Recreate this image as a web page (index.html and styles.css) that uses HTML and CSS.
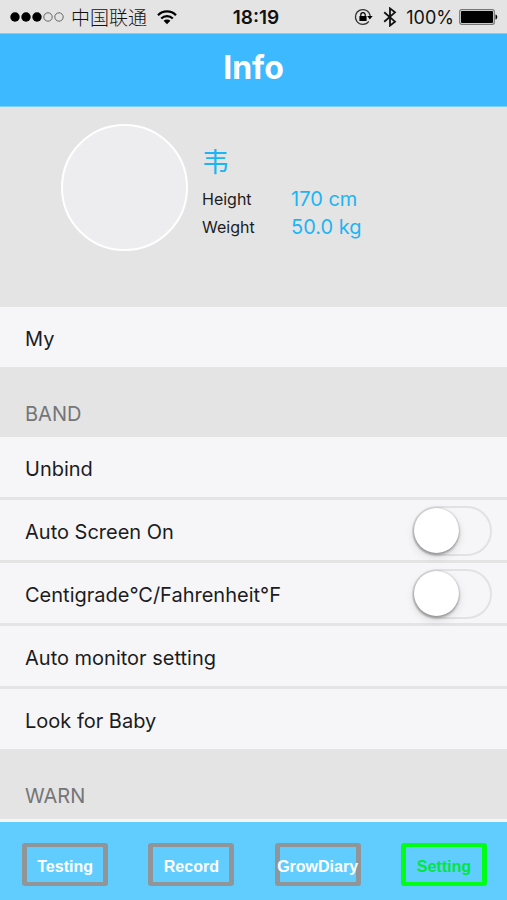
FILE: index.html
```html
<!DOCTYPE html>
<html lang="en">
<head>
<meta charset="utf-8">
<meta name="viewport" content="width=device-width, initial-scale=1">
<title>Info</title>
<link rel="stylesheet" href="styles.css">
</head>
<body>
<div class="status">
  <div class="status-side">
    <svg class="signal" viewBox="0 0 54 12" width="54" height="12" aria-hidden="true">
      <g fill="#000"><circle cx="5" cy="6" r="4.7"/><circle cx="16" cy="6" r="4.7"/><circle cx="27" cy="6" r="4.7"/></g>
      <g fill="none" stroke="#666" stroke-width="1"><circle cx="38" cy="6" r="4.2"/><circle cx="49" cy="6" r="4.2"/></g>
    </svg>
    <span class="carrier" lang="zh">中国联通</span>
    <svg class="wifi" viewBox="0 0 20 15" width="20" height="15" aria-hidden="true">
      <g fill="none" stroke="#000" stroke-width="2.2"><path d="M1 5.2a12.7 12.7 0 0 1 18 0"/><path d="M4.2 8.5a8.2 8.2 0 0 1 11.6 0"/></g>
      <path d="M10 14.2 6.6 10.8a4.8 4.8 0 0 1 6.8 0z"/>
    </svg>
  </div>
  <span class="clock">18:19</span>
  <div class="status-side status-end">
    <svg viewBox="0 0 19 18" width="19" height="18" aria-hidden="true">
      <path d="M14.8 13.4A7.4 7.4 0 1 1 16.2 8" fill="none" stroke="#333" stroke-width="1.2"/>
      <path d="M13.2 8h5.4l-2.7 3.6z"/>
      <rect x="5.4" y="8" width="7.2" height="5" rx=".6"/>
      <path d="M6.8 8.3V6.8a2.2 2.2 0 0 1 4.4 0v1.5" fill="none" stroke="#000" stroke-width="1.2"/>
    </svg>
    <svg class="bluetooth" viewBox="0 0 14 20" width="14" height="20" aria-hidden="true">
      <path d="M1.2 5.2 12 14.6 7 18.6V1.4l5 4L1.2 14.8" fill="none" stroke="#111" stroke-width="1.8"/>
    </svg>
    <span class="percent">100%</span>
    <svg viewBox="0 0 39 16" width="39" height="16" aria-hidden="true">
      <rect x=".7" y=".7" width="34.6" height="14.6" rx="2" fill="none" stroke="#777" stroke-width="1.2"/>
      <rect x="2" y="2" width="32" height="12" rx="1"/>
      <path d="M36.5 5.5c2.4.6 2.4 4.4 0 5z"/>
    </svg>
  </div>
</div>

<header class="title-bar"><h1>Info</h1></header>

<main>
  <section class="profile">
    <div class="avatar"></div>
    <div class="details">
      <h2 lang="zh">韦</h2>
      <dl>
        <dt>Height</dt><dd>170 cm</dd>
        <dt>Weight</dt><dd>50.0 kg</dd>
      </dl>
    </div>
  </section>

  <div class="list">
    <a class="row" href="#my">My</a>
  </div>

  <h3 class="section-title">BAND</h3>
  <div class="list">
    <a class="row" href="#unbind">Unbind</a>
    <div class="row">
      <label for="screen-on">Auto Screen On</label>
      <input class="switch" id="screen-on" type="checkbox" role="switch">
    </div>
    <div class="row">
      <label for="unit">Centigrade°C/Fahrenheit°F</label>
      <input class="switch" id="unit" type="checkbox" role="switch">
    </div>
    <a class="row" href="#monitor">Auto monitor setting</a>
    <a class="row" href="#look">Look for Baby</a>
  </div>

  <h3 class="section-title">WARN</h3>
  <div class="list list-rest"></div>
</main>

<nav class="tabs">
  <button class="tab" type="button"><span>Testing</span></button>
  <button class="tab" type="button"><span>Record</span></button>
  <button class="tab" type="button"><span>GrowDiary</span></button>
  <button class="tab tab-active" type="button" aria-current="page"><span>Setting</span></button>
</nav>
</body>
</html>
```

FILE: styles.css
```css
* {
  box-sizing: border-box;
}

body {
  margin: 0;
  min-height: 100vh;
  display: flex;
  flex-direction: column;
  background: #e4e4e4;
  color: #1c1c1e;
  font-family: Inter, "Noto Sans CJK SC", sans-serif;
  font-size: 20px;
}

h1, h2, h3, dl, dd {
  margin: 0;
}

.status {
  display: grid;
  grid-template-columns: 1fr auto 1fr;
  align-items: center;
  height: 33px;
  padding: 1px 9px 0 10px;
  color: #111;
  font-size: 18px;
}

.status-side {
  display: flex;
  align-items: center;
}

.status-end {
  justify-content: flex-end;
  gap: 5px;
}

.carrier {
  margin: 0 10px 0 7px;
  font-family: "Noto Sans CJK SC", sans-serif;
  font-size: 19px;
  font-weight: 300;
  line-height: 24px;
}

.clock {
  padding-left: 4px;
  font-size: 19px;
  font-weight: 600;
}

.bluetooth {
  margin: 0 4px 0 5px;
}

.title-bar {
  display: flex;
  align-items: center;
  justify-content: center;
  height: 74px;
  padding-bottom: 5px;
  border-top: 1px solid #7dd0fb;
  border-bottom: 1px solid #7dd0fb;
  background: #3db9ff;
  color: #fff;
}

.title-bar h1 {
  font-size: 32px;
  font-weight: 700;
  line-height: 40px;
}

main {
  flex: 1;
  display: flex;
  flex-direction: column;
}

.profile {
  display: flex;
  gap: 14px;
  height: 200px;
  padding: 17px 24px 0 61px;
}

.avatar {
  flex: none;
  width: 127px;
  height: 127px;
  border: 2px solid #fff;
  border-radius: 50%;
  background: #ededef;
}

.details {
  padding-top: 17px;
}

.details h2 {
  padding-bottom: 4px;
  color: #1db4f5;
  font-family: "Noto Sans CJK SC", sans-serif;
  font-size: 27px;
  font-weight: 400;
  line-height: 40px;
}

.details dl {
  display: grid;
  grid-template-columns: 89px auto;
  line-height: 28px;
}

.details dt {
  font-size: 16px;
}

.details dd {
  color: #1db4f5;
}

.list {
  display: flex;
  flex-direction: column;
  gap: 3px;
}

.list-rest {
  flex: 1;
  min-height: 2px;
  background: #f6f6f8;
}

.row {
  display: flex;
  align-items: center;
  justify-content: space-between;
  height: 60px;
  padding: 4px 15px 0 25px;
  background: #f6f6f8;
  color: #1c1c1e;
  text-decoration: none;
}

.section-title {
  height: 70px;
  padding: 35px 25px 0;
  color: #757577;
  font-size: 20px;
  font-weight: 400;
  line-height: 24px;
}

.switch {
  appearance: none;
  flex: none;
  width: 80px;
  height: 50px;
  margin: 0 0 2px;
  border: 2px solid #e2e2e4;
  border-radius: 25px;
}

.switch::before {
  content: "";
  display: block;
  width: 45px;
  height: 45px;
  border-radius: 50%;
  background: #fff;
  box-shadow: 0 2px 3px rgba(0, 0, 0, 0.3), 0 4px 10px rgba(0, 0, 0, 0.12), 0 0 2px rgba(0, 0, 0, 0.25);
}

.switch:checked {
  background: #4cd964;
}

.switch:checked::before {
  margin-left: auto;
}

.tabs {
  display: grid;
  grid-template-columns: repeat(4, 1fr);
  justify-items: center;
  height: 78px;
  padding: 21px 0 0 2px;
  background: #61cdff;
}

.tab {
  display: flex;
  align-items: center;
  justify-content: center;
  width: 86px;
  height: 43px;
  padding: 4px 0 0;
  border: solid #919597;
  border-width: 4px 5px;
  border-radius: 3px;
  background: none;
  color: #fff;
  font-family: "Liberation Sans", Arial, sans-serif;
  font-size: 16px;
  font-weight: 700;
  white-space: nowrap;
}

.tab-active {
  border-color: #00ff15;
  color: #00e63c;
}
```
